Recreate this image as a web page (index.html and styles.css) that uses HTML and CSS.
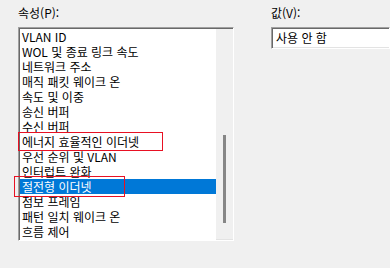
FILE: index.html
```html
<!DOCTYPE html>
<html lang="ko">
<head>
    <meta charset="UTF-8">
    <title>고급 속성</title>
    <link rel="stylesheet" href="styles.css">
</head>
<body>
    <div class="dialog">
        <div class="props">
            <div class="label">속성(P):</div>
            <div class="listbox">
                <ul class="items">
                    <li>VLAN ID</li>
                    <li>WOL 및 종료 링크 속도</li>
                    <li>네트워크 주소</li>
                    <li>매직 패킷 웨이크 온</li>
                    <li>속도 및 이중</li>
                    <li>송신 버퍼</li>
                    <li>수신 버퍼</li>
                    <li>에너지 효율적인 이더넷</li>
                    <li>우선 순위 및 VLAN</li>
                    <li>인터럽트 완화</li>
                    <li class="selected">절전형 이더넷</li>
                    <li>점보 프레임</li>
                    <li>패턴 일치 웨이크 온</li>
                    <li>흐름 제어</li>
                </ul>
                <div class="scrollbar"><div class="thumb"></div></div>
                <!-- 빨간 표시 -->
                <div class="mark mark-eee"></div>
                <div class="mark mark-green"></div>
            </div>
        </div>
        <div class="value">
            <div class="label">값(V):</div>
            <div class="valuebox">사용 안 함</div>
        </div>
    </div>
</body>
</html>
```

FILE: styles.css
```css
body {
  margin: 0;
  background: #f0f0f0;
  font-family: "Noto Sans CJK KR", "Noto Sans", sans-serif;
  font-size: 12px;
  color: #000;
  overflow: hidden;
}
.dialog {
  display: flex;
  padding: 5px 0 0 18px;
}
.props {
  width: 216px;
}
.value {
  flex: 1;
  margin-left: 37px;
}
.label {
  height: 16px;
  line-height: 16px;
  margin-bottom: 6px;
}
.listbox {
  position: relative;
  display: flex;
  height: 214px;
  box-sizing: border-box;
  border: 1px solid;
  border-color: #a0a0a0 #ffffff #ffffff #a0a0a0;
  box-shadow: inset 1px 1px #696969, inset -1px -1px #e3e3e3;
  padding: 1px 0 0 1px;
  background: #fff;
}
.items {
  flex: 1;
  margin: 0;
  padding: 0;
  list-style: none;
  background: #fff;
}
.items li {
  height: 15px;
  line-height: 15px;
  padding-left: 2px;
  white-space: nowrap;
}
.items li.selected {
  background: #0078d7;
  color: #fff;
}
.scrollbar {
  width: 17px;
  margin-bottom: 1px;
  background: #f0f0f0;
}
.thumb {
  width: 3px;
  height: 88px;
  margin: 106px 0 0 7px;
  background: #868686;
}
.mark {
  position: absolute;
  border: 1px solid #e81123;
}
.mark-eee {
  left: -1px;
  top: 104px;
  width: 143px;
  height: 17px;
}
.mark-green {
  left: -5px;
  top: 148px;
  width: 109px;
  height: 19px;
}
.valuebox {
  height: 22px;
  box-sizing: border-box;
  border: 1px solid;
  border-color: #a0a0a0 transparent #ffffff #a0a0a0;
  box-shadow: inset 1px 1px #696969, inset 0 -1px #e3e3e3;
  background: #fff;
  padding: 1px 0 0 4px;
  line-height: 18px;
}
```
